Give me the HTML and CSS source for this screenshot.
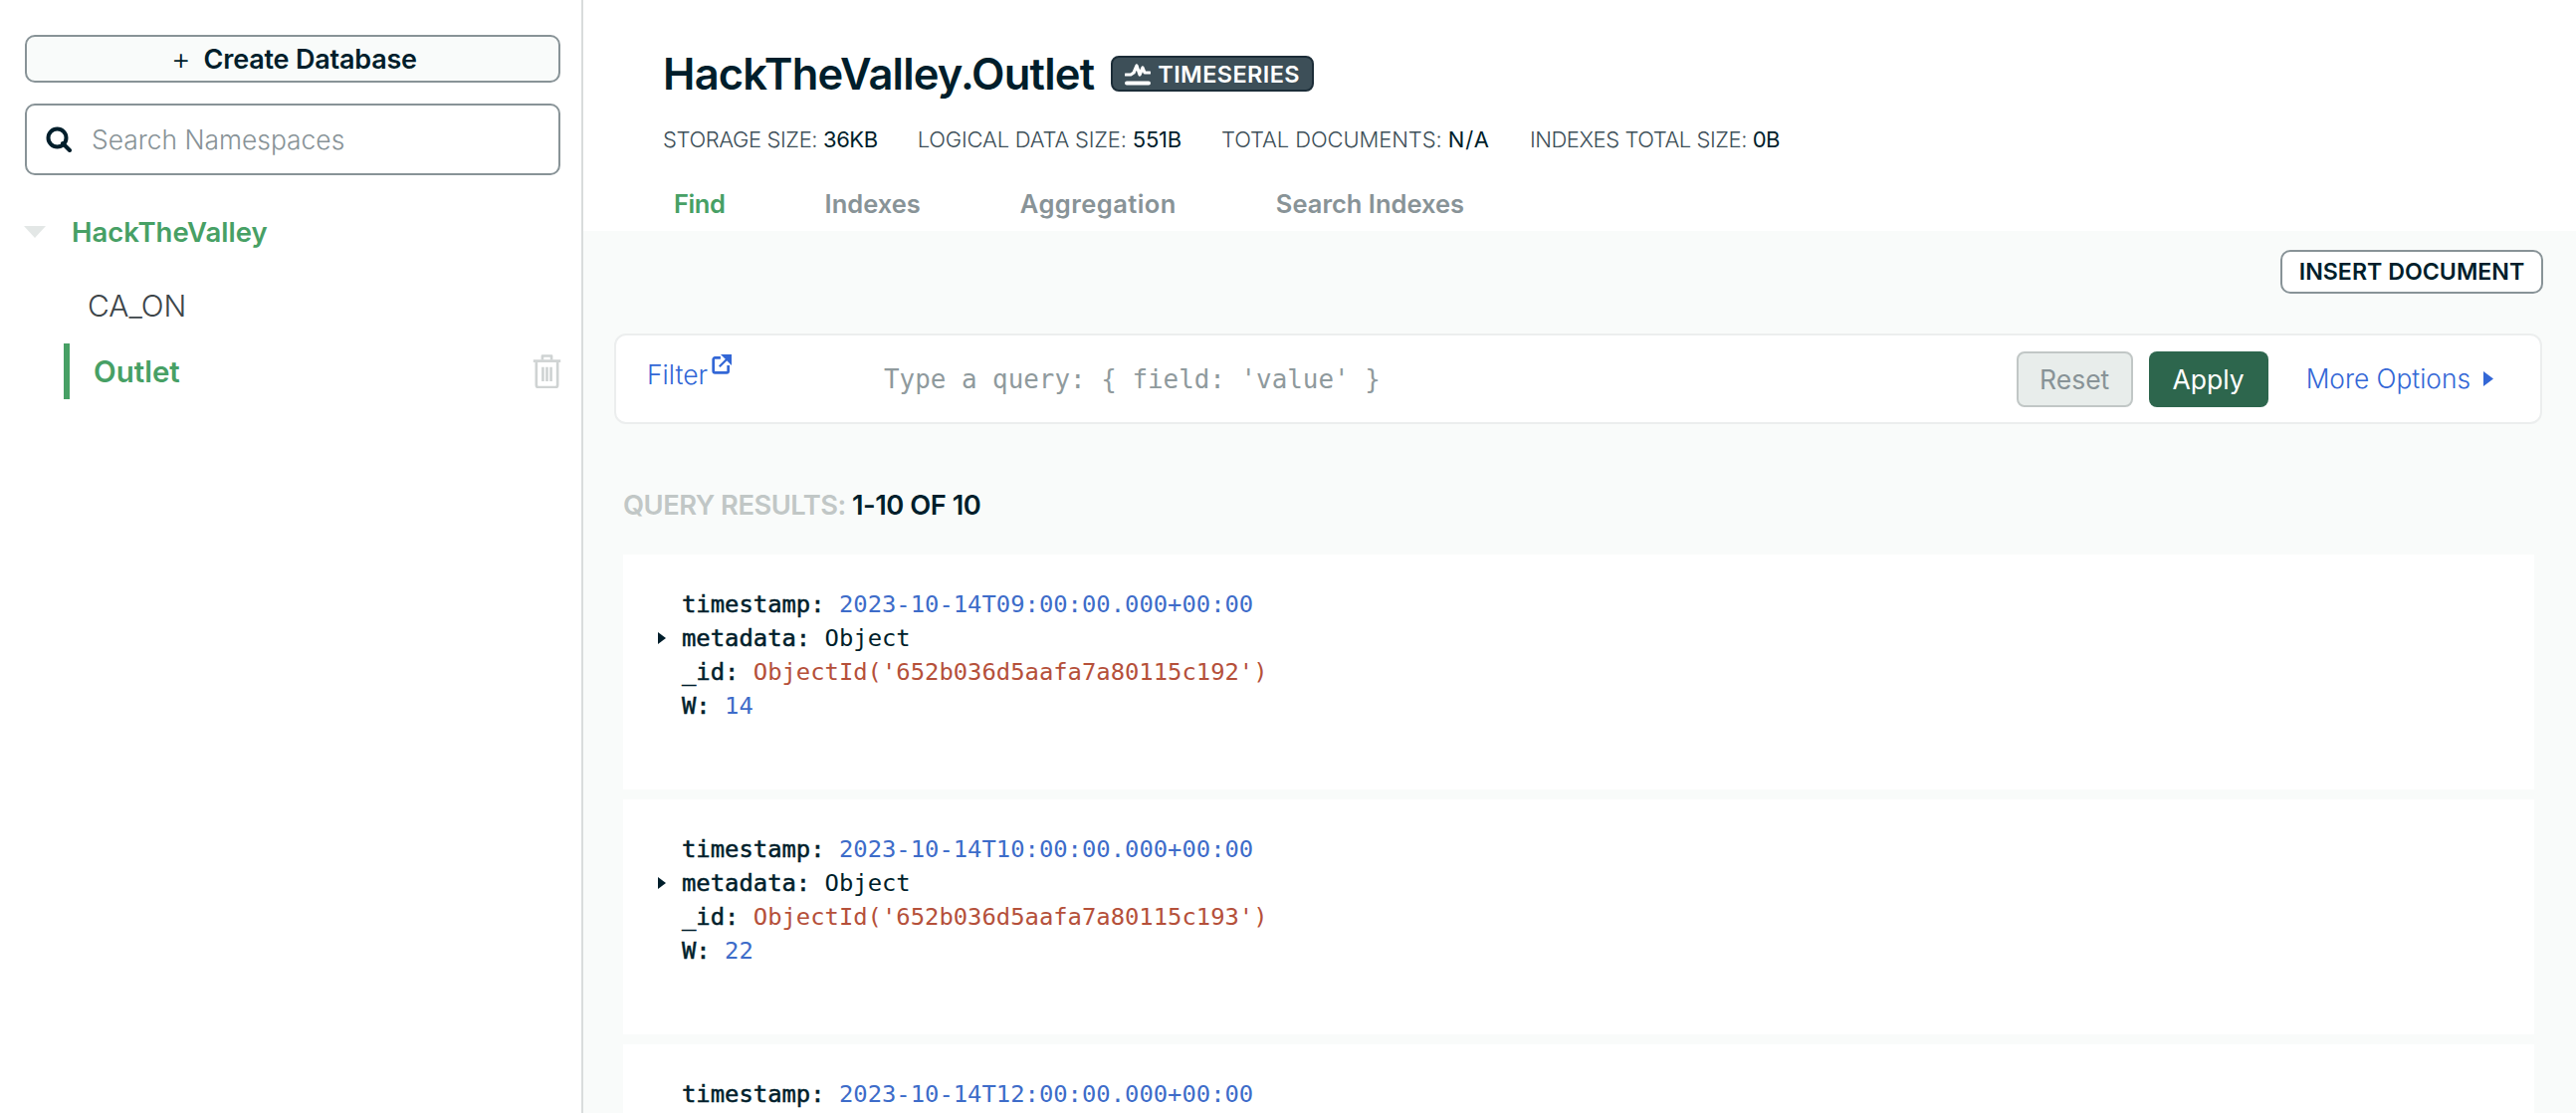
FILE: index.html
```html
<!DOCTYPE html>
<html lang="en">
<head>
<meta charset="utf-8">
<title>HackTheValley.Outlet</title>
<link rel="stylesheet" href="styles.css">
</head>
<body>
<div class="app">
  <aside class="sidebar">
    <button class="create"><span class="plus">+</span>Create Database</button>
    <div class="search">
      <svg class="search-icon" viewBox="0 0 26 26" width="26" height="26"><circle cx="11.5" cy="11.5" r="9" fill="none" stroke="#001e2b" stroke-width="4"/><path d="M17 17l7 7" stroke="#001e2b" stroke-width="4" stroke-linecap="round"/></svg>
      <span class="search-text">Search Namespaces</span>
    </div>
    <div class="db">
      <svg class="caret-down" viewBox="0 0 22 12" width="22" height="12"><path d="M0 0h22L11 12z" fill="#e3e7e6"/></svg>
      <span class="db-name">HackTheValley</span>
    </div>
    <div class="coll">CA_ON</div>
    <div class="coll coll-active">
      <span>Outlet</span>
      <svg class="trash" viewBox="1 .5 27 33.500" width="29" height="34"><g fill="none" stroke="#cfd3d3" stroke-width="2.6" stroke-linejoin="round"><path d="M1 7h27"/><path d="M10 6V2h9v4"/><path d="M4 8v23a2 2 0 0 0 2 2h17a2 2 0 0 0 2-2V8"/><path d="M10.500 13v14M14.500 13v14M18.500 13v14"/></g></svg>
    </div>
  </aside>
  <main class="main">
    <header class="head">
      <div class="title-row">
        <h1 class="title">HackTheValley.Outlet</h1>
        <span class="badge">
          <svg viewBox="0 0 26 24" width="26" height="24"><path d="M1 13h5l3-2 3-7 3 9 3-7 2 5h5" fill="none" stroke="#fff" stroke-width="3.200" stroke-linejoin="round" stroke-linecap="round"/><path d="M2 21.500h22" stroke="#fff" stroke-width="4" stroke-linecap="round"/></svg>
          TIMESERIES
        </span>
      </div>
      <div class="stats">
        <span class="stat">STORAGE SIZE: <b>36KB</b></span>
        <span class="stat">LOGICAL DATA SIZE: <b>551B</b></span>
        <span class="stat">TOTAL DOCUMENTS: <b class="wide">N/A</b></span>
        <span class="stat">INDEXES TOTAL SIZE: <b>0B</b></span>
      </div>
      <nav class="tabs">
        <span class="tab tab-on">Find</span>
        <span class="tab">Indexes</span>
        <span class="tab tab-wide">Aggregation</span>
        <span class="tab">Search Indexes</span>
      </nav>
    </header>
    <section class="body">
      <div class="insert-row"><button class="insert">INSERT DOCUMENT</button></div>
      <div class="query">
        <span class="filter">Filter<svg class="ext" viewBox="0 0 18 18" width="20" height="20"><path d="M8 3H3a1.500 1.500 0 0 0-1.500 1.500V15A1.500 1.500 0 0 0 3 16.500h10.500A1.500 1.500 0 0 0 15 15v-5" fill="none" stroke="#3367d6" stroke-width="2.400"/><path d="M10.500 1h6.500v6.500zM14 4l-7 7" fill="#3367d6" stroke="#3367d6" stroke-width="2"/></svg></span>
        <span class="placeholder">Type a query: { field: 'value' }</span>
        <button class="btn reset">Reset</button>
        <button class="btn apply">Apply</button>
        <span class="more">More Options<svg viewBox="0 0 10 15" width="10" height="15"><path d="M0 0l10 7.500L0 15z" fill="#3367d6"/></svg></span>
      </div>
      <div class="results"><span class="results-label">QUERY RESULTS:</span> 1-10 OF 10</div>
      <article class="doc">
        <div class="line"><span class="k">timestamp:</span> <span class="blue">2023-10-14T09:00:00.000+00:00</span></div>
        <div class="line"><svg class="expander" viewBox="0 0 8 12" width="8" height="12"><path d="M0 0l8 6-8 6z" fill="#001e2b"/></svg><span class="k">metadata:</span> <span class="v">Object</span></div>
        <div class="line"><span class="k">_id:</span> <span class="red">ObjectId('652b036d5aafa7a80115c192')</span></div>
        <div class="line"><span class="k">W:</span> <span class="blue">14</span></div>
      </article>
      <article class="doc">
        <div class="line"><span class="k">timestamp:</span> <span class="blue">2023-10-14T10:00:00.000+00:00</span></div>
        <div class="line"><svg class="expander" viewBox="0 0 8 12" width="8" height="12"><path d="M0 0l8 6-8 6z" fill="#001e2b"/></svg><span class="k">metadata:</span> <span class="v">Object</span></div>
        <div class="line"><span class="k">_id:</span> <span class="red">ObjectId('652b036d5aafa7a80115c193')</span></div>
        <div class="line"><span class="k">W:</span> <span class="blue">22</span></div>
      </article>
      <article class="doc">
        <div class="line"><span class="k">timestamp:</span> <span class="blue">2023-10-14T12:00:00.000+00:00</span></div>
      </article>
    </section>
  </main>
</div>
</body>
</html>
```
FILE: styles.css
```css
* { box-sizing: border-box; }
html, body { margin: 0; height: 100%; overflow: hidden; background: #fff; }
body { font-family: Inter, "Noto Sans", sans-serif; color: #001e2b; }
button { font-family: inherit; cursor: pointer; }
.app { display: flex; height: 1118px; }

.sidebar { width: 586px; flex: none; border-right: 2px solid #d9dcdc; padding: 35px 21px 0 25px; }
.create { width: 100%; height: 48px; display: flex; align-items: center; justify-content: center; background: #f9fbfa; border: 2px solid #889397; border-radius: 10px; font-size: 27px; font-weight: 600; color: #001e2b; letter-spacing: -.2px; padding: 0 0 0 3px; }
.plus { font-weight: 300; font-size: 30px; margin-right: 13px; line-height: 1; }
.search { margin-top: 21px; height: 72px; display: flex; align-items: center; border: 2px solid #889397; border-radius: 10px; padding-left: 19px; }
.search-text { margin-left: 20px; font-size: 26.4px; font-weight: 300; color: #889397; }
.db { margin-top: 37px; height: 40px; display: flex; align-items: center; }
.caret-down { margin-right: 26px; flex: none; margin-left: -1px; }
.db-name { font-size: 27.5px; font-weight: 600; color: #47a065; }
.coll { margin-top: 37px; margin-left: 63px; font-size: 30px; font-weight: 300; color: #3d4549; line-height: 34px; }
.coll-active { margin: 21px 0 0 39px; height: 56px; border-left: 6px solid #47a065; padding-left: 24px; display: flex; align-items: center; justify-content: space-between; color: #47a065; font-weight: 600; font-size: 29.5px; }
.trash { flex: none; margin-right: -1px; }

.main { flex: 1; min-width: 0; display: flex; flex-direction: column; overflow: hidden; }
.head { height: 232px; padding: 49px 0 0 80px; flex: none; }
.title-row { display: flex; align-items: center; height: 50px; }
.title { margin: 0; font-size: 43.5px; font-weight: 600; line-height: 50px; letter-spacing: -.8px; }
.badge { margin-left: 17px; height: 36px; padding: 0 12px; display: flex; align-items: center; gap: 7px; background: #3d4f58; border: 2px solid #1c2d38; border-radius: 8px; color: #fff; font-size: 23.5px; font-weight: 600; letter-spacing: .4px; }
.stats { margin-top: 27px; display: flex; gap: 40px; font-size: 22px; font-weight: 300; color: #3d4f58; line-height: 28px; }
.stat:nth-child(1) { letter-spacing: -.4px; }
.stat:nth-child(2) { letter-spacing: -.2px; }
.stat:nth-child(3) { letter-spacing: -.1px; }
.stat:nth-child(4) { letter-spacing: -.45px; }
.stats b { font-weight: 400; color: #001e2b; }
.stats .wide { letter-spacing: 1px; }
.tabs { margin-top: 35px; display: flex; padding-left: 11px; gap: 100px; font-size: 25.5px; font-weight: 600; color: #889397; line-height: 32px; }
.tab-on { color: #47a065; letter-spacing: -.4px; }
.tab-wide { letter-spacing: .45px; }

.body { flex: 1; background: #f9fbfa; padding: 19px 34px 0 31px; }
.insert-row { display: flex; justify-content: flex-end; margin-right: -1px; }
.insert { height: 44px; width: 264px; background: #fff; border: 2px solid #889397; border-radius: 10px; font-size: 23.2px; font-weight: 600; color: #001e2b; padding: 0; }
.query { margin-top: 40px; height: 91px; background: #fff; border: 2px solid #eceeee; border-radius: 12px; display: flex; align-items: center; padding: 0 47px 0 31px; }
.filter { font-size: 26.5px; font-weight: 300; color: #3367d6; margin-top: -10px; width: 238px; display: flex; align-items: flex-start; flex: none; }
.ext { margin: -4px 0 0 4px; }
.placeholder { flex: 1; font-family: "DejaVu Sans Mono", monospace; font-size: 25.9px; color: #8f9a9d; font-weight: 400; }
.btn { height: 56px; border-radius: 8px; font-size: 26.5px; font-weight: 400; padding: 0; }
.reset { width: 117px; background: #e8edeb; border: 2px solid #c1c7c6; color: #889397; }
.apply { width: 120px; margin-left: 16px; background: #2d664d; border: 0; color: #fff; }
.more { margin-left: 38px; display: flex; align-items: center; gap: 13px; font-size: 26.3px; font-weight: 300; color: #3367d6; }

.results { margin: 64px 0 0 9px; font-size: 27.3px; font-weight: 600; line-height: 36px; color: #001e2b; letter-spacing: -.5px; }
.results-label { color: #c1c7c6; }
.doc { margin: 9px 8px 0 9px; height: 236px; background: #fff; padding: 33px 0 0 59px; font-family: "DejaVu Sans Mono", monospace; font-size: 23.85px; line-height: 34px; color: #001e2b; position: relative; }
.doc + .doc { margin-top: 10px; }
.results + .doc { margin-top: 31px; }
.k { font-weight: 400; -webkit-text-stroke: .5px #001e2b; }
.blue { color: #3d6cc9; }
.red { color: #b5503a; }
.expander { position: absolute; left: 35px; margin-top: 11px; }
```
